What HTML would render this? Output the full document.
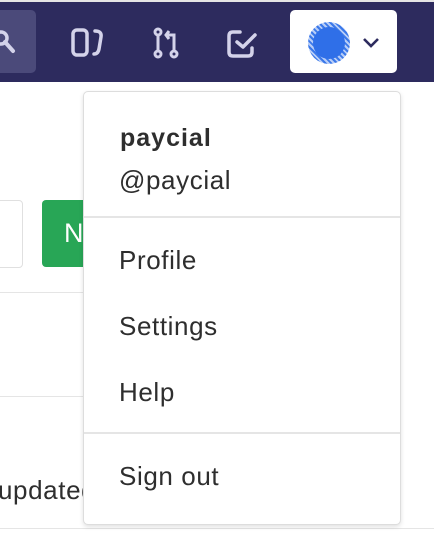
<!DOCTYPE html>
<html><head><style>
body{margin:0;width:434px;height:546px;background:#fff;position:relative;overflow:hidden;font-family:"Liberation Sans",sans-serif;color:#2e2e2e}
.a{position:absolute}
.t{font-size:26px;letter-spacing:0.6px}
</style></head><body>
<div class="a" style="left:0;top:0;width:434px;height:2px;background:#e5e5e5"></div>
<div class="a" style="left:0;top:2px;width:434px;height:80px;background:#2d2b5e"></div>
<div class="a" style="left:-10px;top:10px;width:46px;height:63px;background:#4b4a7a;border-radius:5px"></div>
<svg class="a" style="left:0;top:28px" width="20" height="30"><circle cx="1" cy="10" r="6" fill="none" stroke="#d4d3ea" stroke-width="3.5"/><line x1="5" y1="14" x2="13" y2="23" stroke="#d4d3ea" stroke-width="4" stroke-linecap="round"/></svg>
<svg class="a" style="left:70px;top:27px" width="36" height="32" fill="none" stroke="#d4d3ea" stroke-width="3.5" stroke-linecap="round"><rect x="3" y="3" width="14" height="25" rx="4"/><path d="M25 4 Q32 4 31 10 L29 22 Q28 27 24 27"/></svg>
<svg class="a" style="left:150px;top:27px" width="30" height="32" fill="none" stroke="#d4d3ea" stroke-width="3"><circle cx="8" cy="5" r="3"/><circle cx="8" cy="27" r="3"/><circle cx="24" cy="27" r="3"/><path d="M8 8V24M24 24V8H16M19 4l-3 4 3 4"/></svg>
<svg class="a" style="left:226px;top:28px" width="34" height="32" fill="none" stroke="#d4d3ea" stroke-width="3.5" stroke-linecap="round" stroke-linejoin="round"><path d="M14 4H7Q3 4 3 8V24Q3 28 7 28H22Q26 28 26 24V20"/><path d="M11 14l6 5 12-12"/></svg>
<div class="a" style="left:290px;top:10px;width:107px;height:63px;background:#fff;border-radius:5px"></div>
<div class="a" style="left:308px;top:22px;width:42px;height:42px;border-radius:50%;background:repeating-linear-gradient(45deg,#3a78ea 0 2px,#b7cdf7 2px 4px)"></div>
<div class="a" style="left:313px;top:27px;width:32px;height:32px;border-radius:50%;background:#2f6fe8"></div>
<svg class="a" style="left:361px;top:36px" width="20" height="14"><path d="M3 3l7 7 7-7" fill="none" stroke="#2d2b5e" stroke-width="2.6"/></svg>
<div class="a" style="left:-10px;top:200px;width:31px;height:66px;border:1px solid #e0e0e0;border-radius:4px"></div>
<div class="a" style="left:42px;top:200px;width:60px;height:67px;background:#28a656;border-radius:4px;color:#fff;font-size:27px;line-height:67px;text-indent:22px">N</div>
<div class="a" style="left:0;top:292px;width:100px;height:1px;background:#e5e5e5"></div>
<div class="a" style="left:0;top:396px;width:100px;height:1px;background:#e5e5e5"></div>
<div class="a" style="left:0;top:528px;width:434px;height:1px;background:#e5e5e5"></div>
<div class="a t" style="left:-2px;top:475px">updated</div>
<div class="a" style="left:83px;top:91px;width:316px;height:432px;background:#fff;border:1px solid #ddd;border-radius:5px;box-shadow:0 2px 5px rgba(0,0,0,.12)"></div>
<div class="a" style="left:120px;top:124px;font-size:25px;font-weight:bold;letter-spacing:1px">paycial</div>
<div class="a t" style="left:119px;top:165px">@paycial</div>
<div class="a" style="left:84px;top:216px;width:316px;height:2px;background:#e5e5e5"></div>
<div class="a t" style="left:119px;top:245px">Profile</div>
<div class="a t" style="left:119px;top:311px">Settings</div>
<div class="a t" style="left:119px;top:377px">Help</div>
<div class="a" style="left:84px;top:432px;width:316px;height:2px;background:#e5e5e5"></div>
<div class="a t" style="left:119px;top:461px">Sign out</div>
</body></html>
